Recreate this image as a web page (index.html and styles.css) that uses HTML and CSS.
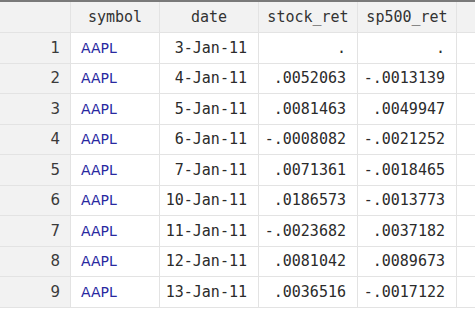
FILE: index.html
```html
<!DOCTYPE html>
<html lang="en">

<head>
    <meta charset="UTF-8">
    <title>Data Editor</title>
    <link rel="stylesheet" href="styles.css">
</head>

<body>
    <table class="grid">
        <thead>
            <tr>
                <th class="rownum"></th>
                <th class="col-symbol">symbol</th>
                <th class="col-date">date</th>
                <th class="col-num">stock_ret</th>
                <th class="col-num">sp500_ret</th>
                <th class="filler"></th>
            </tr>
        </thead>
        <tbody id="rows"></tbody>
    </table>

    <script>
        const data = [
            ['AAPL', '3-Jan-11', '.', '.'],
            ['AAPL', '4-Jan-11', '.0052063', '-.0013139'],
            ['AAPL', '5-Jan-11', '.0081463', '.0049947'],
            ['AAPL', '6-Jan-11', '-.0008082', '-.0021252'],
            ['AAPL', '7-Jan-11', '.0071361', '-.0018465'],
            ['AAPL', '10-Jan-11', '.0186573', '-.0013773'],
            ['AAPL', '11-Jan-11', '-.0023682', '.0037182'],
            ['AAPL', '12-Jan-11', '.0081042', '.0089673'],
            ['AAPL', '13-Jan-11', '.0036516', '-.0017122']
        ];

        const tbody = document.getElementById('rows');
        data.forEach((item, i) => {
            const row = document.createElement('tr');
            row.innerHTML = `
                <td class="rownum">${i + 1}</td>
                <td class="str">${item[0]}</td>
                <td class="mono">${item[1]}</td>
                <td class="mono">${item[2]}</td>
                <td class="mono">${item[3]}</td>
                <td class="filler"></td>
            `;
            tbody.appendChild(row);
        });
    </script>
</body>

</html>
```

FILE: styles.css
```css
body {
    margin: 0;
    background: #ffffff;
    overflow: hidden;
}

.grid {
    width: 475px;
    border-collapse: collapse;
    table-layout: fixed;
    border-top: 2px solid #7a7a7a;
}

th,
td {
    padding: 0;
    border-right: 1px solid #e3e3e3;
    border-bottom: 1px solid #e3e3e3;
    white-space: nowrap;
    overflow: hidden;
}

th {
    height: 30px;
    background-color: #f2f2f2;
    font-family: "DejaVu Sans Mono", monospace;
    font-size: 15px;
    font-weight: normal;
    color: #333;
    text-align: center;
}

td {
    height: 29.5px;
}

.rownum {
    width: 60px;
    padding-right: 10px;
    background-color: #f2f2f2;
    text-align: right;
    font-family: "DejaVu Sans", sans-serif;
    font-size: 15px;
    color: #3a3a3a;
}

th.rownum {
    padding-right: 0;
    width: 70px;
}

.col-symbol {
    width: 88px;
}

.col-date {
    width: 98px;
}

.col-num {
    width: 98px;
}

.filler {
    border-right: none;
}

.str {
    padding-left: 10px;
    font-family: "DejaVu Sans", sans-serif;
    font-size: 14px;
    color: #2828a0;
}

.mono {
    padding-right: 11px;
    text-align: right;
    font-family: "DejaVu Sans Mono", monospace;
    font-size: 15px;
    color: #2b2b2b;
}
```
